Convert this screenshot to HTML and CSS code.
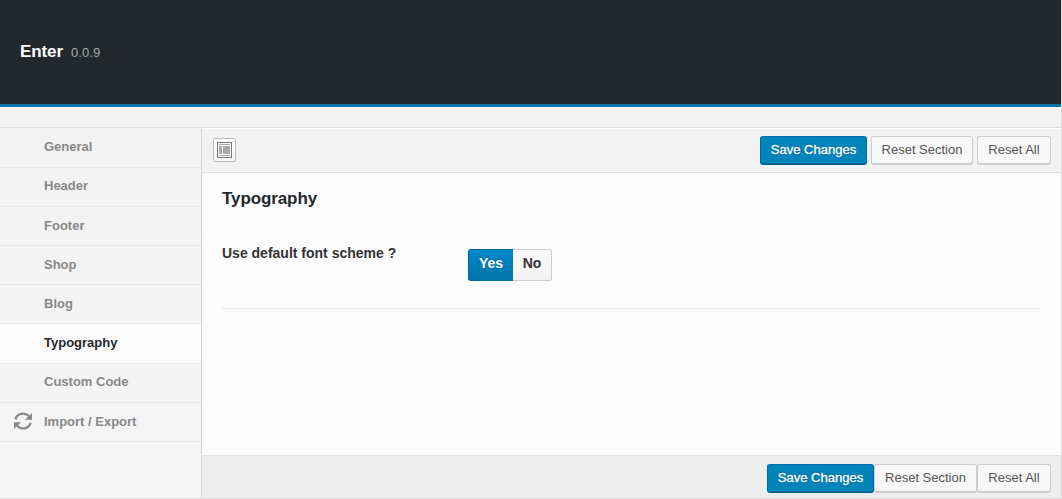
FILE: index.html
```html
<!DOCTYPE html>
<html lang="en">
<head>
<meta charset="utf-8">
<title>Enter</title>
<link rel="stylesheet" href="styles.css">
</head>
<body>
<div class="panel">
  <header class="header"><h2 class="brand">Enter</h2><span class="version">0.0.9</span></header>
  <div class="intro"></div>
  <div class="body">
    <nav class="sidebar">
      <a class="item tall">General</a>
      <a class="item high">Header</a>
      <a class="item low">Footer</a>
      <a class="item">Shop</a>
      <a class="item">Blog</a>
      <a class="item tall active">Typography</a>
      <a class="item high">Custom Code</a>
      <a class="item low"><svg class="refresh" width="18" height="18" viewBox="0 0 18 18"><g fill="none" stroke="#888" stroke-width="2.3"><path d="M1.4 7.4C3 1.2 10.6-.1 15 4.3"/><path d="M16.6 10.8C15 17 7.4 18.2 3 13.8"/></g><path fill="#888" d="M18 1v6.8h-7zM0 17v-6.8h7z"/></svg>Import / Export</a>
    </nav>
    <main class="main">
      <div class="toolbar">
        <button class="expand" aria-label="Expand"><svg width="15" height="16" viewBox="0 0 15 16" shape-rendering="crispEdges"><path fill="#777" d="M0 0h15v16H0z"/><path fill="#fff" d="M1 1h13v14H1z"/><path fill="#aaa" d="M2 2h11v1H2zM2 4h3v8H2zM6 4h7v8H6zM2 13h11v1H2z"/></svg></button>
        <div class="actions">
          <button class="btn primary">Save Changes</button><button class="btn section">Reset Section</button><button class="btn all">Reset All</button>
        </div>
      </div>
      <section class="content">
        <h3 class="title">Typography</h3>
        <div class="field">
          <div class="label">Use default font scheme ?</div>
          <div class="switch"><span class="yes">Yes</span><span class="no">No</span></div>
        </div>
      </section>
      <footer class="footer">
        <div class="actions joined">
          <button class="btn primary">Save Changes</button><button class="btn section wide">Reset Section</button><button class="btn all">Reset All</button>
        </div>
      </footer>
    </main>
  </div>
</div>
</body>
</html>
```
FILE: styles.css
```css
* { box-sizing: border-box; }
body { margin: 0; background: #f1f1f1; font: 13px/18px "Liberation Sans", Arial, sans-serif; color: #333; }
.panel { display: flex; flex-direction: column; width: 1062px; height: 499px; border-right: 1px solid #dedede; border-bottom: 1px solid #dcdcdc; }
.header { display: flex; align-items: baseline; height: 107px; padding: 42px 20px 0; background: #23282d; border-bottom: 3px solid #0074a8; }
.brand { margin: 0 8px 0 0; font-size: 17px; line-height: 20px; letter-spacing: -.1px; color: #fff; }
.version { color: #a5a9ac; font-size: 13px; letter-spacing: .1px; }
.intro { height: 21px; background: #f2f2f2; border-top: 1px solid #fff; border-bottom: 1px solid #dedede; }
.body { display: flex; flex: 1; min-height: 0; }
.sidebar { width: 202px; border-right: 1px solid #d5d5d5; background: linear-gradient(#f2f2f2, #f5f5f5); }
.item { display: flex; align-items: center; position: relative; height: 39px; padding: 0 0 1px 44px; border-bottom: 1px solid #e7e7e7; font-weight: bold; color: #888; }
.item.tall { height: 40px; padding-bottom: 2px; }
.item.high { padding-bottom: 3px; }
.item.low { padding-bottom: 0; }
.item.active { background: #fcfcfc; color: #23282d; }
.refresh { position: absolute; left: 14px; top: 9px; }
.main { display: flex; flex-direction: column; flex: 1; }
.toolbar { display: flex; justify-content: space-between; height: 45px; padding: 7px 10px 0 11px; border-top: 1px solid #fff; border-bottom: 1px solid #dedede; background: #f2f2f2; }
.expand { display: flex; align-items: center; justify-content: center; width: 23px; height: 24px; margin-top: 2px; padding: 0; border: 1px solid #bbb; border-radius: 2px; background: linear-gradient(#fff, #f3f3f3); }
.actions { display: flex; gap: 4px; }
.actions.joined { gap: 0; }
.btn { height: 29px; padding: 0; border: 1px solid #ccc; border-bottom-width: 2px; border-radius: 3px; background: #f7f7f7; color: #555; font: 13px/26px "Liberation Sans", Arial, sans-serif; white-space: nowrap; }
.btn.primary { width: 107px; border-color: #0073aa #006799 #006799; background: #0085ba; color: #fff; text-shadow: 0 -1px 1px #006799, 0 1px 1px #006799; -webkit-text-stroke: .3px #fff; }
.btn.section { width: 102px; }
.btn.section.wide { width: 103px; }
.btn.all { width: 74px; }
.content { flex: 1; padding: 14px 20px 0; background: #fcfcfc; }
.title { margin: 0; font-size: 17px; line-height: 24px; letter-spacing: -.1px; color: #23282d; }
.field { display: flex; height: 98px; border-bottom: 1px solid #e7e7e7; padding-top: 38px; }
.label { width: 246px; font-size: 14px; line-height: 8px; font-weight: bold; }
.switch { display: flex; height: 32px; font-size: 14px; line-height: 26px; font-weight: bold; text-align: center; }
.yes { width: 45px; border: 1px solid #006799; border-right: 0; border-radius: 3px 0 0 3px; background: linear-gradient(#0088cc, #0074a8); color: #fff; text-shadow: 0 -1px 1px #006799; }
.no { width: 39px; border: 1px solid #ccc; border-left: 0; border-radius: 0 3px 3px 0; background: linear-gradient(#fafafa, #f3f3f3); color: #333; }
.footer { display: flex; justify-content: flex-end; height: 43px; padding: 8px 10px 0; border-top: 1px solid #e3e3e3; background: #ededed; }
```
